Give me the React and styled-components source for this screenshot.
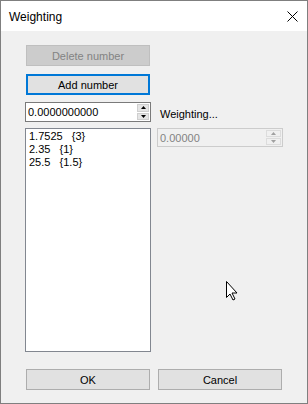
import React from 'react';
import styled, { createGlobalStyle } from 'styled-components';

const GlobalStyle = createGlobalStyle`
  html, body {
    margin: 0;
    padding: 0;
    background: #ffffff;
  }
`;

const Window = styled.div`
  width: 308px;
  height: 404px;
  box-sizing: border-box;
  border: 1px solid #7f7f7f;
  display: flex;
  flex-direction: column;
  position: relative;
  font-family: 'Liberation Sans', Arial, sans-serif;
  font-size: 11px;
  color: #000000;
`;

const TitleBar = styled.div`
  height: 30px;
  flex: 0 0 30px;
  background: #ffffff;
  display: flex;
  align-items: center;
  justify-content: space-between;
  padding: 0 9px 0 8px;
`;

const Title = styled.span`
  font-size: 12px;
  line-height: 14px;
  padding-top: 1px;
`;

const Client = styled.div`
  flex: 1;
  background: #f0f0f0;
  padding: 14px 0 0 24px;
  display: grid;
  grid-template-columns: 126px 126px;
  column-gap: 6px;
  align-content: start;
`;

const Button = styled.button`
  grid-column: ${(p) => p.$col || 1};
  justify-self: center;
  width: 124px;
  height: 21px;
  margin: ${(p) => p.$top || 0}px 0 0;
  padding: 0;
  box-sizing: border-box;
  font-family: inherit;
  font-size: 11px;
  color: ${(p) => (p.disabled ? '#838383' : '#000000')};
  background: ${(p) => (p.disabled ? '#cccccc' : '#e1e1e1')};
  border: ${(p) =>
    p.$focused ? '2px solid #0078d7' : p.disabled ? '1px solid #bfbfbf' : '1px solid #adadad'};
  outline: none;
`;

const SpinBox = styled.div`
  grid-column: ${(p) => p.$col || 1};
  align-self: start;
  margin-top: ${(p) => p.$top || 0}px;
  height: ${(p) => p.$h}px;
  box-sizing: border-box;
  border: 1px solid ${(p) => (p.$disabled ? '#cccccc' : '#7a7a7a')};
  background: ${(p) => (p.$disabled ? '#f0f0f0' : '#ffffff')};
  display: flex;
  align-items: stretch;
`;

const SpinText = styled.span`
  flex: 1;
  padding: ${(p) => p.$pt}px 0 0 2px;
  line-height: 13px;
  color: ${(p) => (p.$disabled ? '#838383' : '#000000')};
`;

const SpinButtons = styled.div`
  width: ${(p) => p.$w}px;
  margin: 1px 1px 1px 0;
  display: flex;
  flex-direction: column;
  gap: 1px;
`;

const SpinButton = styled.div`
  flex: 1;
  box-sizing: border-box;
  background: ${(p) => (p.$disabled ? '#f0f0f0' : '#e5e5e5')};
  border: 1px solid ${(p) => (p.$disabled ? '#dcdcdc' : '#cfcfcf')};
  display: flex;
  align-items: center;
  justify-content: center;
`;

const Label = styled.span`
  grid-column: 2;
  align-self: end;
  padding-left: 3px;
  line-height: 13px;
  margin-bottom: 1px;
`;

const ListBox = styled.div`
  grid-column: 1;
  margin-top: 6px;
  height: 224px;
  box-sizing: border-box;
  border: 1px solid #828790;
  background: #ffffff;
  padding: 1px 0 0 3px;
`;

const ListItem = styled.div`
  line-height: 13px;
  white-space: pre;
`;

const Cursor = styled.svg`
  position: absolute;
  left: 224px;
  top: 279px;
`;

const Arrow = ({ up, color }) => (
  <svg width="5" height="3" viewBox="0 0 5 3">
    <path d={up ? 'M2.5 0 L5 3 L0 3 Z' : 'M0 0 L5 0 L2.5 3 Z'} fill={color} />
  </svg>
);

const Spinner = ({ value, col, top, h, pt, bw, disabled }) => (
  <SpinBox $col={col} $top={top} $h={h} $disabled={disabled}>
    <SpinText $pt={pt} $disabled={disabled}>{value}</SpinText>
    <SpinButtons $w={bw}>
      <SpinButton $disabled={disabled}>
        <Arrow up color={disabled ? '#a0a0a0' : '#000000'} />
      </SpinButton>
      <SpinButton $disabled={disabled}>
        <Arrow color={disabled ? '#a0a0a0' : '#000000'} />
      </SpinButton>
    </SpinButtons>
  </SpinBox>
);

const items = ['1.7525   {3}', '2.35   {1}', '25.5   {1.5}'];

const App = () => {
  return (
    <>
      <GlobalStyle />
      <Window>
        <TitleBar>
          <Title>Weighting</Title>
          <svg width="11" height="11" viewBox="0 0 11 11">
            <path d="M0.5 0.5 L10.5 10.5 M10.5 0.5 L0.5 10.5" stroke="#000" strokeWidth="1" />
          </svg>
        </TitleBar>
        <Client>
          <Button disabled>Delete number</Button>
          <Button $top={8} $focused>
            Add number
          </Button>
          <Spinner value="0.0000000000" col={1} top={7} h={20} pt={3} bw={12} />
          <Label>Weighting...</Label>
          <ListBox>
            {items.map((it) => (
              <ListItem key={it}>{it}</ListItem>
            ))}
          </ListBox>
          <Spinner value="0.00000" col={2} top={6} h={19} pt={3} bw={15} disabled />
          <Button $top={17}>OK</Button>
          <Button $top={17} $col={2}>
            Cancel
          </Button>
        </Client>
        <Cursor width="13" height="21" viewBox="0 0 13 21">
          <path
            d="M1.5 1.5 L1.5 17.5 L5 14 L8 20 L10 19 L7 13 L12 13 Z"
            fill="#ffffff"
            stroke="#000000"
            strokeWidth="1"
            strokeLinejoin="miter"
          />
        </Cursor>
      </Window>
    </>
  );
};

export default App;
